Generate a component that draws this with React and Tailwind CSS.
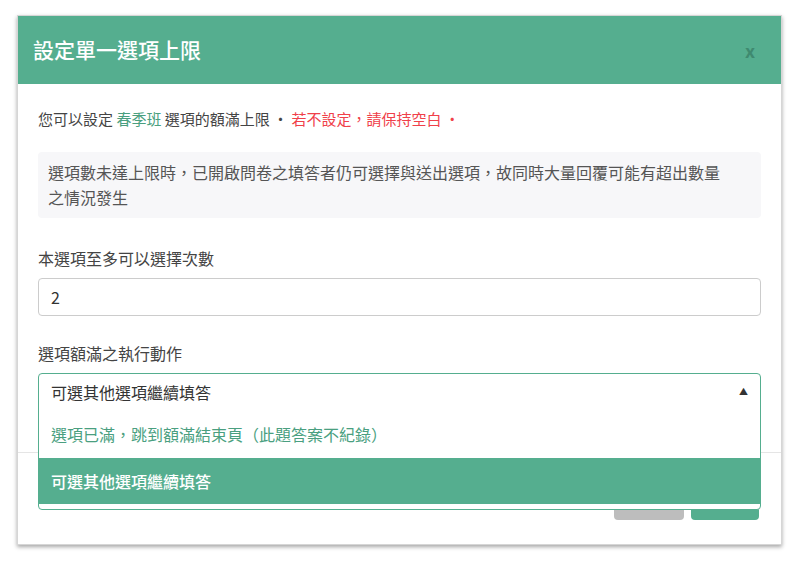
export default function App() {
  const f = { fontFamily: '"Noto Sans CJK TC", "Liberation Sans", sans-serif' };
  return (
    <div className="w-[800px] h-[568px] bg-white pt-[15px] pl-[17px]" style={f}>
      <div className="w-[765px] h-[530px] bg-white border border-[#d6d6d6] shadow-[0_2px_4px_rgba(0,0,0,0.35)] flex flex-col">
        <div className="h-[68px] bg-[#55ae8f] flex items-center justify-between pl-[15px] pr-[26px] shrink-0">
          <div className="text-white text-[21px] font-medium">設定單一選項上限</div>
          <div className="text-[#3f8a70] text-[18px] font-bold">x</div>
        </div>
        <div className="relative flex-1 px-[20px]">
          <div className="absolute left-0 right-0 top-[368px] border-t border-[#e5e5e5]" />
          <div className="absolute right-[22px] top-[402px] flex gap-[7px]">
            <div className="w-[70px] h-[34px] bg-[#bdbdbd] rounded" />
            <div className="w-[68px] h-[34px] bg-[#55ae8f] rounded" />
          </div>
          <div className="pt-[24px] text-[15px] text-[#444] leading-[22px]">
            您可以設定 <span className="text-[#4a9f80]">春季班</span> 選項的額滿上限 • <span className="text-[#f0404a]">若不設定，請保持空白 •</span>
          </div>
          <div className="mt-[22px] bg-[#f7f7f9] rounded pl-[10px] pr-[30px] py-[8px] text-[16px] leading-[25px] text-[#555]">
            選項數未達上限時，已開啟問卷之填答者仍可選擇與送出選項，故同時大量回覆可能有超出數量之情況發生
          </div>
          <div className="mt-[29px] text-[16px] leading-[22px] text-[#444]">本選項至多可以選擇次數</div>
          <div className="mt-[9px] h-[38px] border border-[#ccc] rounded flex items-center px-[12px] text-[16px] text-[#333]">2</div>
          <div className="mt-[26px] text-[16px] leading-[22px] text-[#444]">選項額滿之執行動作</div>
          <div className="relative mt-[9px] h-[137px] border border-[#55ae8f] rounded bg-white overflow-hidden">
            <div className="h-[36px] flex items-center justify-between px-[12px] text-[16px] text-[#333]">
              <span>可選其他選項繼續填答</span>
              <span className="text-[9px] text-[#333]">▲</span>
            </div>
            <div className="h-[48px] flex items-center px-[12px] text-[16px] text-[#4a9f80]">選項已滿，跳到額滿結束頁（此題答案不紀錄）</div>
            <div className="h-[46px] bg-[#55ae8f] flex items-center px-[12px] text-[16px] text-white font-medium">可選其他選項繼續填答</div>
          </div>
        </div>
      </div>
    </div>
  );
}
